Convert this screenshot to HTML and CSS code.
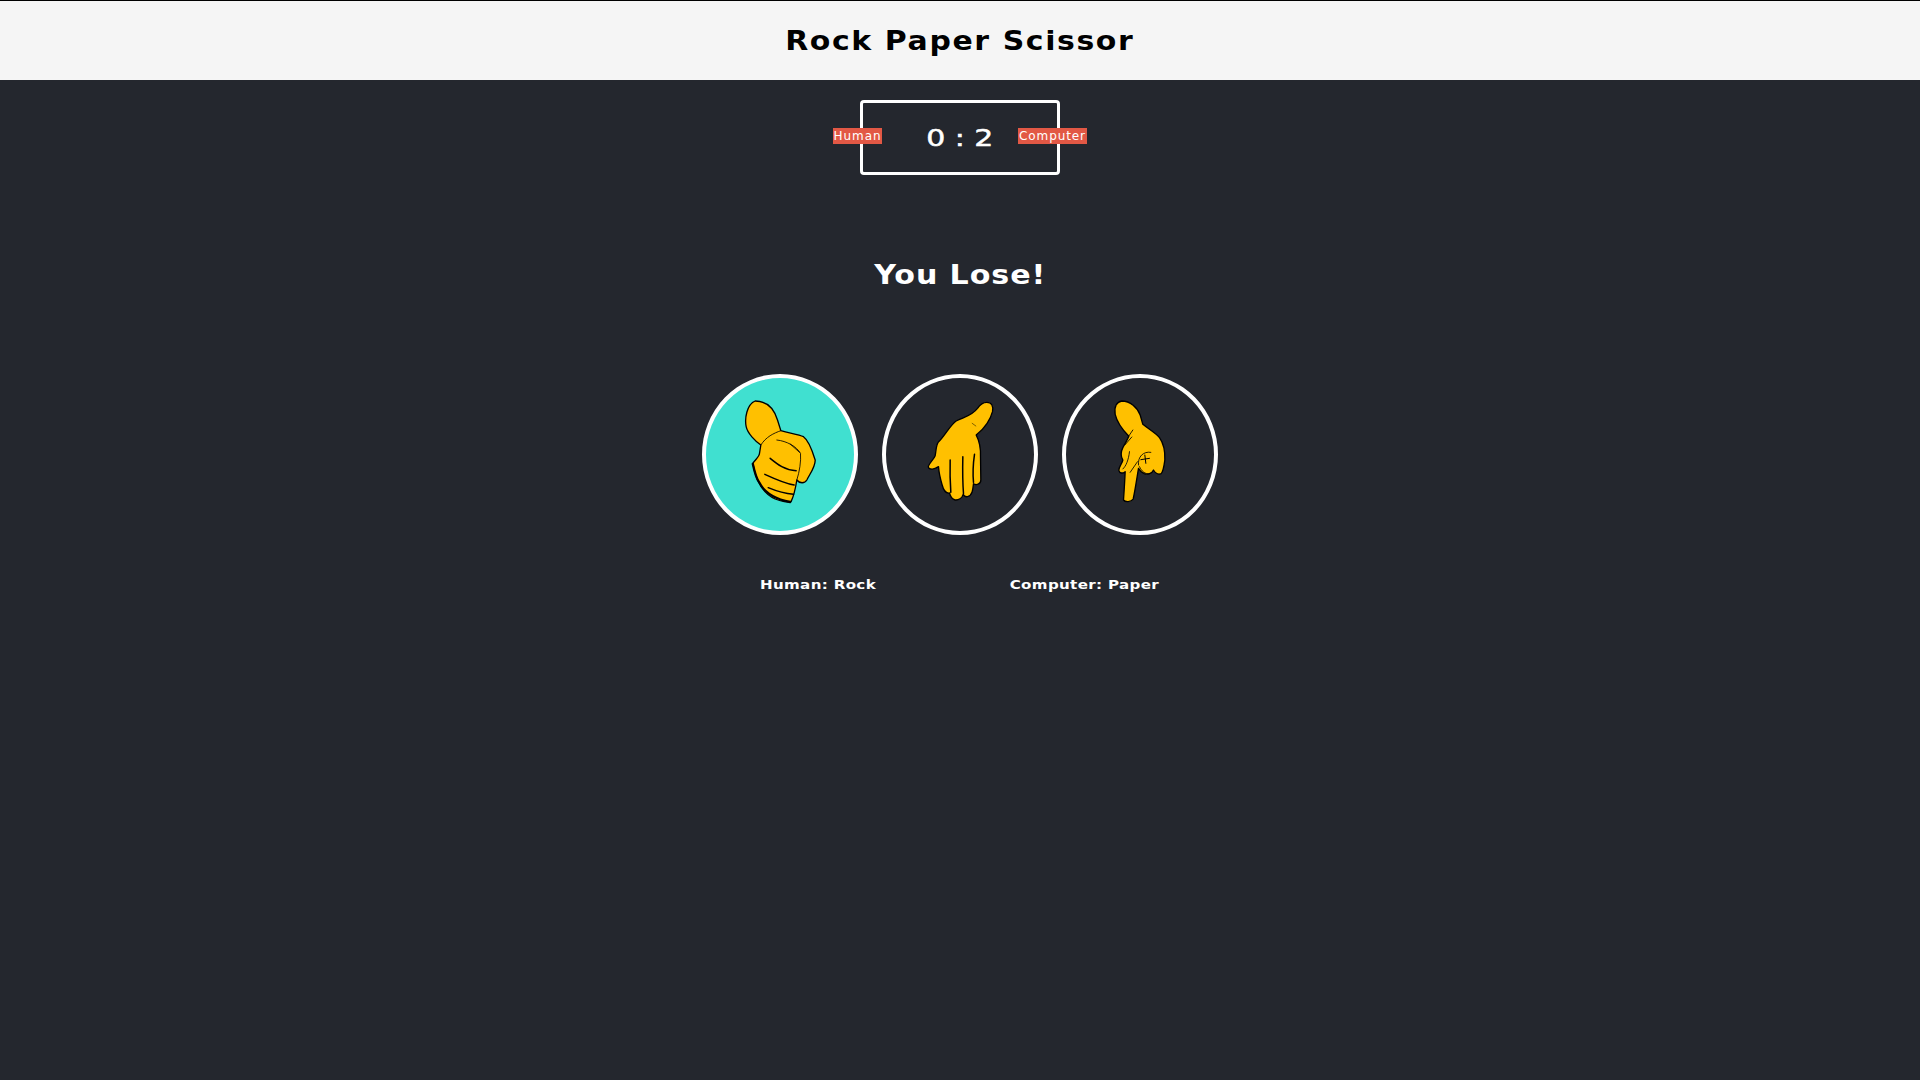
FILE: index.html
```html
<!DOCTYPE html>
<html lang="en">
<head>
<meta charset="utf-8">
<title>Rock Paper Scissor</title>
<link rel="stylesheet" href="styles.css">
</head>
<body>
<header class="header"><h1 class="title">Rock Paper Scissor</h1></header>
<section class="score-board">
  <span class="badge badge-human">Human</span>
  <span class="badge badge-computer">Computer</span>
  <span class="score">0 : 2</span>
</section>
<p class="result">You Lose!</p>
<section class="choices">
  <button class="choice choice-active" aria-label="Rock">
    <svg class="hand" viewBox="48 39 443 459">
      <path class="skin" d="M195 108C225 108 250 125 262 165L272 197C300 205 325 208 340 215C358 228 368 262 375 285C376 305 360 325 350 345C344 356 328 356 320 345C316 370 310 395 303 409C296 414 270 408 255 402C232 392 215 372 205 350C196 335 192 315 188 295C196 283 208 275 208 265L212 240C195 228 172 205 168 185C163 160 170 118 195 108Z"/>
      <path class="ink-thick" d="M188 297C193 320 198 340 207 352C222 382 255 402 300 411"/>
      <path class="ink" d="M212 240C228 215 250 205 272 197M260 225C290 228 320 245 331 265C333 290 328 320 320 345M300 237L328 262"/>
      <path class="ink-mid" d="M240 280C262 298 285 316 318 317M224 328C250 340 285 356 312 360M234 368C258 378 285 386 310 388"/>
    </svg>
  </button>
  <button class="choice" aria-label="Paper">
    <svg class="hand" viewBox="48 39 443 459">
      <path class="skin" d="M350 112C364 112 370 122 367 140C362 160 345 190 318 210C326 225 332 250 331 275L332 345C332 358 318 362 310 356C308 375 306 392 292 395C285 396 281 392 279 388C276 400 265 406 255 405C243 402 240 392 238 384C228 386 220 375 216 360C210 340 206 320 205 305C195 312 182 315 175 308C170 302 190 285 195 272C198 255 198 240 204 232C225 212 240 180 258 168C285 155 305 152 322 130C330 118 340 112 350 112Z"/>
      <path class="ink-mid" d="M240 285C239 320 240 355 242 382M278 275C277 320 278 360 280 386M313 268C309 295 308 330 310 352"/>
      <path class="ink-thin" d="M306 175L317 183"/>
    </svg>
  </button>
  <button class="choice" aria-label="Scissor">
    <svg class="hand" viewBox="48 39 443 459">
      <path class="skin" d="M215 108C240 108 262 128 270 150L278 178C295 192 318 205 328 218C342 238 345 262 344 285C342 300 340 318 333 326C323 330 314 322 310 315C306 325 292 330 282 326C274 322 268 316 265 310C260 340 255 375 249 402C243 412 225 412 220 405C222 375 224 345 225 320C218 326 208 326 206 316C206 305 216 295 218 285C212 275 212 260 218 248C224 235 232 225 236 214C218 195 200 170 195 148C191 125 200 110 215 108Z"/>
      <path class="ink" d="M234 216L248 195M224 240L245 216M238 260C235 285 228 303 218 312M240 322L262 290M265 300C262 275 280 258 302 262M268 305C275 320 285 328 298 326"/>
      <path class="ink-mark" d="M272 284L298 280M284 270L287 295"/>
    </svg>
  </button>
</section>
<section class="messages">
  <p class="message">Human: Rock</p>
  <p class="message">Computer: Paper</p>
</section>
</body>
</html>
```
FILE: styles.css
```css
* {
  box-sizing: border-box;
}

body {
  margin: 0;
  min-height: 100vh;
  background: #24272e;
  color: #fff;
  font-family: "DejaVu Sans", sans-serif;
}

.header {
  display: flex;
  align-items: center;
  justify-content: center;
  height: 80px;
  background: #f5f5f5;
  border-top: 1px solid #000;
}

.title {
  margin: 0;
  color: #000;
  font-size: 26px;
  font-weight: 700;
  letter-spacing: 1.4px;
  transform: scaleX(1.15);
}

.score-board {
  position: relative;
  display: flex;
  align-items: center;
  justify-content: center;
  width: 200px;
  height: 75px;
  margin: 20px auto 0;
  border: 3px solid #fff;
  border-radius: 4px;
}

.score {
  display: inline-block;
  font-size: 23px;
  -webkit-text-stroke: 0.5px #fff;
  transform: scaleX(1.3);
}

.badge {
  position: absolute;
  top: 25px;
  background: #e25845;
  color: #fff;
  font-size: 12px;
  line-height: 16px;
  letter-spacing: 0.9px;
  text-align: center;
}

.badge-human {
  left: -30px;
  width: 49px;
}

.badge-computer {
  right: -30px;
  width: 69px;
}

.result {
  width: fit-content;
  margin: 83px auto 0;
  font-size: 26px;
  font-weight: 700;
  line-height: 34px;
  letter-spacing: 0.8px;
  transform: scaleX(1.157);
}

.choices {
  display: flex;
  justify-content: center;
  gap: 24px;
  margin-top: 82px;
}

.choice {
  width: 156px;
  height: 161px;
  padding: 0;
  background: transparent;
  border: 4px solid #fff;
  border-radius: 50%;
}

.choice-active {
  background: #40e0d0;
}

.hand {
  display: block;
  width: 148px;
  height: 153px;
}

.skin {
  fill: #ffc000;
  stroke: #000;
  stroke-width: 4;
  stroke-linejoin: round;
}

.ink,
.ink-mid,
.ink-mark,
.ink-thick,
.ink-thin {
  fill: none;
  stroke: #000;
  stroke-linecap: round;
  stroke-linejoin: round;
}

.ink {
  stroke-width: 2.5;
}

.ink-mid {
  stroke-width: 4.5;
}

.ink-mark {
  stroke-width: 3;
}

.ink-thick {
  stroke-width: 7;
}

.ink-thin {
  stroke-width: 1.5;
}

.messages {
  display: flex;
  justify-content: center;
  gap: 152px;
  margin-top: 41px;
  padding-right: 3px;
}

.message {
  margin: 0;
  font-size: 13px;
  font-weight: 700;
  line-height: 18px;
  letter-spacing: 0.3px;
  transform: scaleX(1.16);
}
```
